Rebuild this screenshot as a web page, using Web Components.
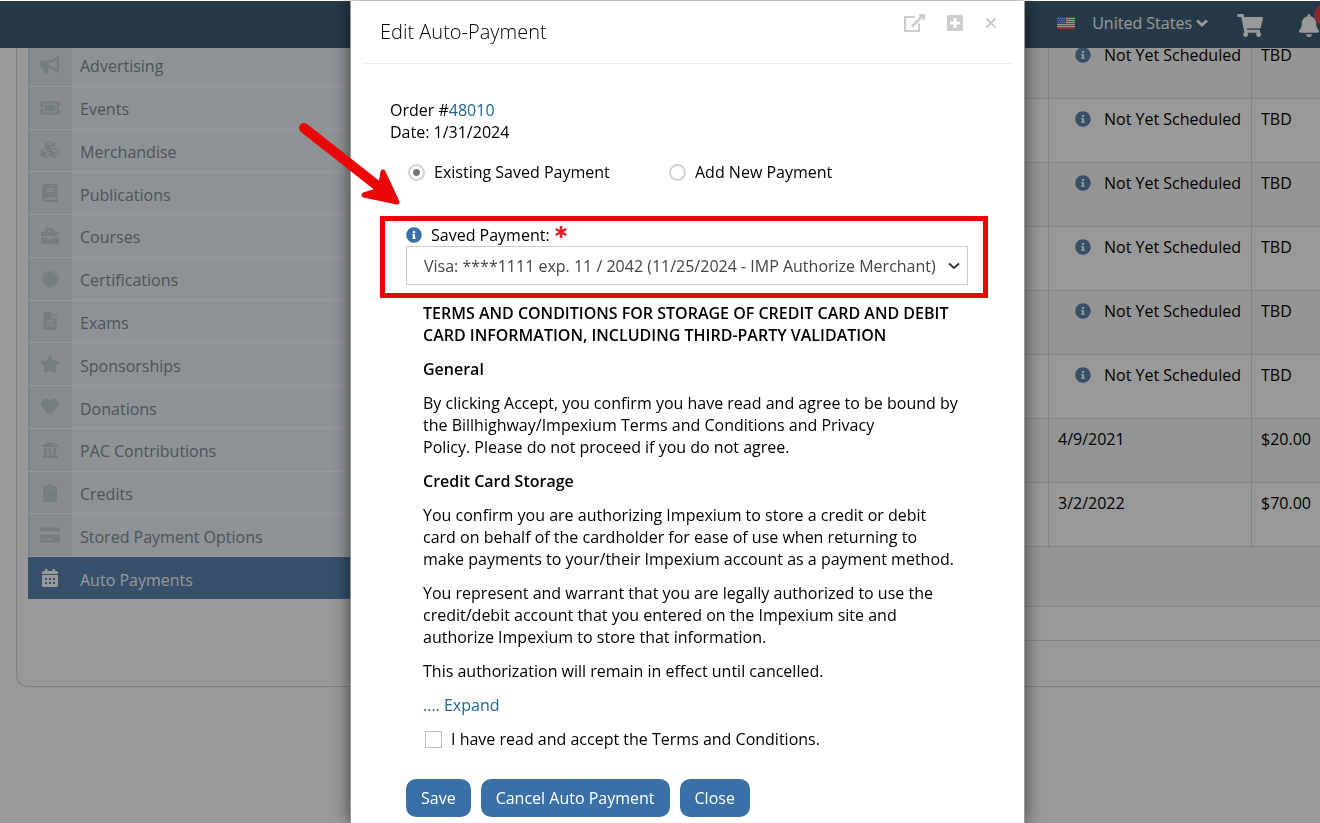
<!DOCTYPE html>
<html lang="en">
<head>
<meta charset="utf-8">
<meta name="viewport" content="width=device-width, initial-scale=1">
<title>Auto Payments</title>
<style>
	html, body {
		margin: 0;
		height: 100%;
		overflow: hidden;
	}
	body {
		font-family: "Open Sans", "Noto Sans", sans-serif;
		font-size: 16px;
		line-height: 22px;
		color: #000;
		background: #fff;
	}
</style>
</head>
<body>
<auto-payments-page></auto-payments-page>

<script>
const icons = {
	bullhorn: ['0 0 576 512', '<path d="M576 240c0-23.63-12.95-44.04-32-55.12V32.010C544 23.260 537.020 0 512 0c-7.120 0-14.190 2.380-19.980 7.020l-85.030 68.030C364.280 109.190 310.660 128 256 128H64c-35.350 0-64 28.650-64 64v96c0 35.350 28.650 64 64 64h33.700c-1.390 10.480-2.180 21.140-2.180 32 0 39.770 9.260 77.350 25.560 110.940 5.190 10.690 16.520 17.060 28.400 17.060h74.280c26.050 0 41.690-29.840 25.900-50.560-16.400-21.520-26.150-48.360-26.150-77.440 0-11.110 1.620-21.790 4.410-32H256c54.660 0 108.280 18.810 150.980 52.950l85.030 68.030a32 32 0 0 0 19.980 7.020c24.920 0 32-22.780 32-32V295.130C563.050 284.040 576 263.630 576 240zm-96 141.420l-33.050-26.440C392.950 311.780 325.120 288 256 288v-96c69.120 0 136.950-23.780 190.950-66.980L480 98.580v282.840z"/>'],
	ticket: ['0 0 576 512', '<path d="M128 160h320v192H128V160zm400 96c0 26.510 21.490 48 48 48v96c0 26.510-21.490 48-48 48H48c-26.510 0-48-21.490-48-48v-96c26.510 0 48-21.490 48-48s-21.490-48-48-48v-96c0-26.510 21.490-48 48-48h480c26.510 0 48 21.490 48 48v96c-26.510 0-48 21.490-48 48zm-48-104c0-13.255-10.745-24-24-24H120c-13.255 0-24 10.745-24 24v208c0 13.255 10.745 24 24 24h336c13.255 0 24-10.745 24-24V152z"/>'],
	cubes: ['0 0 18 16', '<path fill-rule="evenodd" d="M9 0l4.300 1.600v4.600l4.200 1.800v5.300L13.200 15.400 9 13.300l-4.200 2.100L.5 13.300V8l4.200-1.800V1.600zM9 1.300L6.100 2.400 9 3.500l2.900-1.100zM9.700 4.600v2.600l2.500-1.100V3.700zM4.800 7.400L2 8.600l2.800 1.200 2.800-1.200zM13.200 7.400l-2.800 1.200 2.800 1.200L16 8.600zM5.500 11v2.900l2.700-1.400V9.800zM13.900 11v2.900l2.500-1.400V9.800z"/>'],
	book: ['0 0 448 512', '<path d="M448 360V24c0-13.300-10.700-24-24-24H96C43 0 0 43 0 96v320c0 53 43 96 96 96h328c13.300 0 24-10.700 24-24v-16c0-7.500-3.500-14.300-8.900-18.700-4.200-15.400-4.200-59.300 0-74.700 5.400-4.300 8.900-11.100 8.900-18.600zM128 134c0-3.300 2.700-6 6-6h212c3.300 0 6 2.700 6 6v20c0 3.300-2.700 6-6 6H134c-3.300 0-6-2.700-6-6v-20zm0 64c0-3.300 2.700-6 6-6h212c3.300 0 6 2.700 6 6v20c0 3.300-2.700 6-6 6H134c-3.300 0-6-2.700-6-6v-20zm253.400 250H96c-17.700 0-32-14.300-32-32 0-17.600 14.400-32 32-32h285.400c-1.900 17.100-1.900 46.900 0 64z"/>'],
	briefcase: ['0 0 512 512', '<path d="M320 336c0 8.840-7.160 16-16 16h-96c-8.840 0-16-7.160-16-16v-48H0v144c0 25.600 22.400 48 48 48h416c25.600 0 48-22.400 48-48V288H320v48zm144-208h-80V80c0-25.600-22.400-48-48-48H176c-25.600 0-48 22.400-48 48v48H48c-25.600 0-48 22.400-48 48v80h512v-80c0-25.600-22.400-48-48-48zm-144 0H192V96h128v32z"/>'],
	certificate: ['-9 -9 18 18', '<circle r="7"/><circle r="7.500" fill="none" stroke="currentColor" stroke-width="3" pathLength="32" stroke-dasharray="1 1"/>'],
	file: ['0 0 384 512', '<path d="M224 136V0H24C10.700 0 0 10.700 0 24v464c0 13.300 10.700 24 24 24h336c13.300 0 24-10.700 24-24V160H248c-13.200 0-24-10.800-24-24zm64 236c0 6.600-5.400 12-12 12H108c-6.600 0-12-5.400-12-12v-8c0-6.600 5.400-12 12-12h168c6.600 0 12 5.400 12 12v8zm0-64c0 6.600-5.400 12-12 12H108c-6.600 0-12-5.400-12-12v-8c0-6.600 5.400-12 12-12h168c6.600 0 12 5.400 12 12v8zm0-72v8c0 6.600-5.400 12-12 12H108c-6.600 0-12-5.400-12-12v-8c0-6.600 5.400-12 12-12h168c6.600 0 12 5.400 12 12zm96-114.100v6.100H256V0h6.100c6.400 0 12.500 2.500 17 7l97.900 98c4.500 4.500 7 10.600 7 16.900z"/>'],
	star: ['0 0 576 512', '<path d="M259.300 17.800L194 150.200 47.900 171.500c-26.200 3.800-36.700 36.100-17.700 54.600l105.700 103-25 145.500c-4.500 26.300 23.200 46 46.400 33.700L288 439.600l130.700 68.700c23.200 12.200 50.900-7.400 46.400-33.700l-25-145.500 105.700-103c19-18.500 8.500-50.800-17.700-54.600L382 150.200 316.700 17.800c-11.700-23.600-45.600-23.900-57.400 0z"/>'],
	heart: ['0 0 512 512', '<path d="M462.300 62.600C407.500 15.900 326 24.300 275.700 76.200L256 96.500l-19.700-20.300C186.100 24.300 104.500 15.900 49.700 62.600c-62.800 53.600-66.100 149.800-9.900 207.900l193.500 199.800c12.500 12.900 32.800 12.900 45.300 0l193.500-199.800c56.300-58.100 53-154.300-9.800-207.900z"/>'],
	bank: ['0 0 18 18', '<path d="M9 1l8 3v2H1V4zM3 7h2.500v6H3zM7.800 7h2.400v6H7.800zM12.500 7H15v6h-2.500zM2 13.500h14V15h1v2H1v-2h1z"/>'],
	clipboard: ['0 0 14 18', '<path fill-rule="evenodd" d="M1.500 2H4a3 3 0 0 1 6 0h2.500A1.500 1.500 0 0 1 14 3.500v13a1.500 1.500 0 0 1-1.500 1.500h-11A1.500 1.500 0 0 1 0 16.500v-13A1.500 1.500 0 0 1 1.500 2zM7 1.400a.8.8 0 1 0 0 1.600.8.8 0 0 0 0-1.600zM4 4.500v.700h6v-.700z"/>'],
	card: ['0 0 20 18', '<path fill-rule="evenodd" d="M1.500 1.500h17A1.500 1.500 0 0 1 20 3v2H0V3a1.500 1.500 0 0 1 1.500-1.500zM0 8.500h20V15a1.500 1.500 0 0 1-1.500 1.500h-17A1.500 1.500 0 0 1 0 15zM2.500 12.500V14H5v-1.500zM6.500 12.500V14h5v-1.500z"/>'],
	calendar: ['0 0 16 18', '<path fill-rule="evenodd" d="M3 0h2.500v2h5V0H13v2h1.500A1.500 1.500 0 0 1 16 3.500V5H0V3.500A1.500 1.500 0 0 1 1.500 2H3zM0 6h16v10.500a1.500 1.500 0 0 1-1.500 1.500h-13A1.500 1.500 0 0 1 0 16.500zM3 9v2h2V9zM7 9v2h2V9zM11 9v2h2V9zM3 13v2h2v-2zM7 13v2h2v-2zM11 13v2h2v-2z"/>'],
	info: ['0 0 512 512', '<path d="M256 8C119.043 8 8 119.083 8 256c0 136.997 111.043 248 248 248s248-111.003 248-248C504 119.083 392.957 8 256 8zm0 110c23.196 0 42 18.804 42 42s-18.804 42-42 42-42-18.804-42-42 18.804-42 42-42zm56 254c0 6.627-5.373 12-12 12h-88c-6.627 0-12-5.373-12-12v-24c0-6.627 5.373-12 12-12h12v-64h-12c-6.627 0-12-5.373-12-12v-24c0-6.627 5.373-12 12-12h64c6.627 0 12 5.373 12 12v100h12c6.627 0 12 5.373 12 12v24z"/>'],
	cart: ['0 0 576 512', '<path d="M528.120 301.319l47.273-208C578.806 78.301 567.391 64 551.990 64H159.208l-9.166-44.810C147.758 8.021 137.930 0 126.529 0H24C10.745 0 0 10.745 0 24v16c0 13.255 10.745 24 24 24h69.883l70.248 343.435C147.325 417.100 136 435.222 136 456c0 30.928 25.072 56 56 56s56-25.072 56-56c0-15.674-6.447-29.835-16.824-40h209.647C430.447 426.165 424 440.326 424 456c0 30.928 25.072 56 56 56s56-25.072 56-56c0-22.172-12.888-41.332-31.579-50.405l5.517-24.276c3.413-15.018-8.002-29.319-23.403-29.319H218.117l-6.545-32h293.145c11.206 0 20.920-7.754 23.403-18.681z"/>'],
	bell: ['0 0 448 512', '<path d="M224 512c35.320 0 63.970-28.650 63.970-64H160.030c0 35.350 28.650 64 63.970 64zm215.390-149.710c-19.320-20.760-55.470-51.990-55.470-154.290 0-77.700-54.480-139.900-127.940-155.160V32c0-17.670-14.320-32-31.980-32s-31.980 14.330-31.980 32v20.840C118.560 68.100 64.080 130.300 64.080 208c0 102.300-36.150 133.530-55.470 154.290-6 6.450-8.660 14.160-8.610 21.710.110 16.400 12.980 32 32.100 32h383.800c19.120 0 32-15.600 32.100-32 .050-7.550-2.610-15.270-8.610-21.710z"/>'],
	flag: ['0 0 18 12', '<path fill="#fff" d="M0 0h18v12H0z"/><path fill="#ef5b50" d="M0 0h18v1H0zM0 2h18v1H0zM0 4h18v1H0zM0 6h18v1H0zM0 8h18v1H0zM0 10h18v2H0z"/><path fill="#4f7fd8" d="M0 0h9v7H0z"/><path stroke="#a9bbe6" stroke-width="1" stroke-dasharray="1 1" d="M1 1.500h7M2 3.500h6M1 5.500h7"/>'],
	chevron: ['0 0 12 8', '<path fill="none" stroke="currentColor" stroke-width="2" d="M1 1.500l5 4.500 5-4.500"/>'],
	caret: ['0 0 12 8', '<path fill="none" stroke="currentColor" stroke-width="3" d="M1 1.500l5 4.500 5-4.500"/>'],
	popout: ['0 0 21 18', '<path fill="none" stroke="currentColor" stroke-width="2" d="M11 3H1v14h14V9.500"/><path fill="none" stroke="currentColor" stroke-width="3" d="M8 12.500l9.500-9.500"/><path d="M14 0h7v7l-2.300-2.300-2.400-2.400z"/>'],
	plus: ['0 0 16 16', '<path fill-rule="evenodd" d="M1.500 0h13A1.500 1.500 0 0 1 16 1.500v13a1.500 1.500 0 0 1-1.500 1.500h-13A1.500 1.500 0 0 1 0 14.500v-13A1.500 1.500 0 0 1 1.500 0zM6.500 3v3.500H3v3h3.500V13h3V9.500H13v-3H9.500V3z"/>'],
	close: ['0 0 12 12', '<path fill="none" stroke="currentColor" stroke-width="2" d="M1.500 1.500l9 9M10.500 1.500l-9 9"/>'],
	asterisk: ['0 0 12 12', '<path fill="none" stroke="currentColor" stroke-width="2.500" d="M6 0v12M.8 3l10.400 6M11.200 3L.8 9"/>']
};

class SvgIcon extends HTMLElement {
	constructor() {
		super();
		const [viewBox, shape] = icons[this.getAttribute('name')];
		this.attachShadow({mode: 'open'}).innerHTML = `
			<style>
				:host { display: inline-flex; width: 20px; height: 18px; }
				svg { width: 100%; height: 100%; fill: currentColor; }
			</style>
			<svg viewBox="${viewBox}" aria-hidden="true">${shape}</svg>
		`;
	}
}

class TopBar extends HTMLElement {
	constructor() {
		super();
		this.attachShadow({mode: 'open'}).innerHTML = `
			<style>
				:host {
					position: relative;
					z-index: 1;
					display: flex;
					justify-content: flex-end;
					align-items: center;
					box-sizing: border-box;
					height: 47px;
					padding-bottom: 3px;
					color: #fff;
					background: #3e5f76;
				}
				button {
					display: flex;
					align-items: center;
					padding: 0;
					border: 0;
					font: inherit;
					color: inherit;
					background: none;
				}
				.country { margin-right: 29px; }
				.country span { margin: 0 4px 0 17px; }
				.flag { width: 18px; height: 12px; }
				.caret { width: 12px; height: 8px; }
				.cart { width: 26px; height: 23px; margin-right: 35px; }
				.cart, .alerts { margin-top: 4px; }
				.alerts { position: relative; }
				.bell { width: 22px; height: 23px; }
				.badge {
					position: absolute;
					top: -9px;
					left: 16px;
					width: 20px;
					height: 20px;
					border-radius: 50%;
					background: #e8454b;
				}
			</style>
			<button class="country">
				<svg-icon class="flag" name="flag"></svg-icon>
				<span>United States</span>
				<svg-icon class="caret" name="caret"></svg-icon>
			</button>
			<button aria-label="Cart"><svg-icon class="cart" name="cart"></svg-icon></button>
			<button class="alerts" aria-label="Notifications">
				<svg-icon class="bell" name="bell"></svg-icon>
				<span class="badge"></span>
			</button>
		`;
	}
}

class NavItem extends HTMLElement {
	constructor() {
		super();
		this.attachShadow({mode: 'open'}).innerHTML = `
			<style>
				:host { display: grid; color: #788b98; background: #eff5f8; }
				:host([active]) { color: #fff; background: #5a84b2; }
				a {
					display: flex;
					align-items: stretch;
					color: inherit;
					text-decoration: none;
				}
				.icon {
					display: flex;
					flex: none;
					align-items: center;
					justify-content: center;
					width: 40px;
					padding-right: 2px;
					color: #c3d0d9;
					background: #e2eaee;
					border-left: 2px solid #d0dbe6;
				}
				:host([active]) .icon {
					color: inherit;
					background: none;
					border-color: transparent;
				}
				.label { align-self: center; padding: 3px 0 0 8px; }
			</style>
			<a href="#">
				<span class="icon"><svg-icon name="${this.getAttribute('icon')}"></svg-icon></span>
				<span class="label"><slot></slot></span>
			</a>
		`;
	}
}

class SideNav extends HTMLElement {
	constructor() {
		super();
		this.attachShadow({mode: 'open'}).innerHTML = `
			<style>
				:host { display: block; }
				nav {
					display: grid;
					grid-auto-rows: 1fr;
					gap: 1px;
					min-height: 555px;
				}
			</style>
			<nav><slot></slot></nav>
		`;
	}
}

class PaymentsTable extends HTMLElement {
	constructor() {
		super();
		const pending = '<tr><td></td><td class="pending"><svg-icon name="info"></svg-icon>Not Yet Scheduled</td><td>TBD</td></tr>';
		this.attachShadow({mode: 'open'}).innerHTML = `
			<style>
				:host { display: block; }
				table {
					width: 100%;
					table-layout: fixed;
					border-collapse: collapse;
				}
				td {
					height: 44px;
					padding: 9px 9px 10px;
					vertical-align: top;
					border: solid #dcdcdc;
					border-width: 0 1px 1px 0;
				}
				tr:nth-child(odd) { background: #f9f9f9; }
				.date { width: 203px; }
				.amount { width: 83px; }
				.pending { padding-left: 26px; }
				.pending svg-icon {
					width: 16px;
					height: 16px;
					margin-right: 13px;
					vertical-align: -2px;
					color: #5a84b2;
				}
				.strip { height: 33px; border-bottom: 1px solid #dcdcdc; }
				.pager { height: 59px; background: #f9f9f9; }
			</style>
			<table>
				<colgroup><col><col class="date"><col class="amount"></colgroup>
				<tbody>
					${pending.repeat(6)}
					<tr><td></td><td>4/9/2021</td><td>$20.00</td></tr>
					<tr><td></td><td>3/2/2022</td><td>$70.00</td></tr>
				</tbody>
			</table>
			<div class="strip pager"></div>
			<div class="strip"></div>
		`;
	}
}

class ModalDialog extends HTMLElement {
	constructor() {
		super();
		this.attachShadow({mode: 'open'}).innerHTML = `
			<style>
				:host {
					position: fixed;
					inset: 1px 0 0;
					z-index: 2;
					display: flex;
					padding: 0 295px 0 350px;
					background: rgba(0, 0, 0, .4);
				}
				section {
					flex: 1;
					background: #fff;
					border: solid #999;
					border-width: 0 1px;
					box-shadow: 0 0 16px rgba(0, 0, 0, .6);
				}
				header {
					display: flex;
					align-items: center;
					height: 62px;
					margin: 0 11px;
					border-bottom: 1px solid #ebebeb;
				}
				h1 {
					flex: 1;
					margin: 0;
					padding-left: 18px;
					font-size: 20px;
					line-height: 22px;
					font-weight: 300;
				}
				.tools {
					display: flex;
					align-items: center;
					gap: 22px;
					padding: 0 16px 18px 0;
				}
				.tools button {
					display: flex;
					padding: 0;
					border: 0;
					color: #ccc;
					background: none;
				}
				.tools svg-icon { width: 16px; height: 16px; }
				.tools .popout { width: 21px; height: 18px; }
				.tools .close { width: 12px; height: 12px; }
				.body { padding: 35px 36px 0 29px; }
			</style>
			<section role="dialog" aria-labelledby="title">
				<header>
					<h1 id="title"><slot name="title"></slot></h1>
					<div class="tools">
						<button aria-label="Open in new window"><svg-icon class="popout" name="popout"></svg-icon></button>
						<button aria-label="Maximize"><svg-icon name="plus"></svg-icon></button>
						<button aria-label="Close"><svg-icon class="close" name="close"></svg-icon></button>
					</div>
				</header>
				<div class="body"><slot></slot></div>
			</section>
		`;
	}
}

class PaymentSource extends HTMLElement {
	constructor() {
		super();
		this.attachShadow({mode: 'open'}).innerHTML = `
			<style>
				:host {
					display: grid;
					grid-template-columns: 261px 1fr;
					padding: 18px 0 33px 28px;
				}
				label { display: flex; align-items: center; gap: 9px; }
				input {
					appearance: none;
					width: 17px;
					height: 17px;
					margin: 0;
					border: 2px solid #d2d2d2;
					border-radius: 50%;
					background: #fff;
				}
				input:checked {
					background: radial-gradient(circle, #777 3px, #fff 4px);
				}
			</style>
			<label><input type="radio" name="source" checked>Existing Saved Payment</label>
			<label><input type="radio" name="source">Add New Payment</label>
		`;
	}
}

class SavedPaymentField extends HTMLElement {
	constructor() {
		super();
		this.attachShadow({mode: 'open'}).innerHTML = `
			<style>
				:host {
					display: block;
					padding: 3px 15px 8px 21px;
					border: 5px solid #ea0606;
				}
				label { display: flex; align-items: center; }
				.info {
					width: 16px;
					height: 16px;
					margin-right: 9px;
					color: #3a70a8;
				}
				.required {
					width: 12px;
					height: 12px;
					margin: 0 0 6px 5px;
					color: #e61c24;
				}
				.control { position: relative; }
				select {
					appearance: none;
					display: block;
					width: 100%;
					height: 39px;
					padding: 0 17px;
					border: 1px solid #ccc;
					border-radius: 0;
					font: inherit;
					color: #444;
					background: #fff;
				}
				.chevron {
					position: absolute;
					top: 16px;
					right: 8px;
					width: 12px;
					height: 8px;
					color: #333;
					pointer-events: none;
				}
			</style>
			<label for="saved">
				<svg-icon class="info" name="info"></svg-icon>Saved Payment:
				<svg-icon class="required" name="asterisk"></svg-icon>
			</label>
			<div class="control">
				<select id="saved">
					<option>Visa: ****1111 exp. 11 / 2042 (11/25/2024 - IMP Authorize Merchant)</option>
				</select>
				<svg-icon class="chevron" name="chevron"></svg-icon>
			</div>
		`;
	}
}

class PaymentTerms extends HTMLElement {
	constructor() {
		super();
		this.attachShadow({mode: 'open'}).innerHTML = `
			<style>
				:host { display: block; padding: 4px 28px 0 43px; }
				h2, p {
					margin: 0 0 12px;
					font-size: 16px;
					line-height: 22px;
				}
				h2 { font-weight: 600; }
				a { color: #1b6692; text-decoration: none; }
				label { display: flex; align-items: center; gap: 9px; padding-left: 2px; }
				input {
					appearance: none;
					width: 17px;
					height: 17px;
					margin: 0;
					border: 1px solid #bbb;
					background: #fff;
				}
			</style>
			<h2>TERMS AND CONDITIONS FOR STORAGE OF CREDIT CARD AND DEBIT CARD INFORMATION, INCLUDING THIRD-PARTY VALIDATION</h2>
			<h2>General</h2>
			<p>By clicking Accept, you confirm you have read and agree to be bound by the Billhighway/Impexium Terms and Conditions and Privacy Policy.&nbsp;Please do not proceed if you do not agree.</p>
			<h2>Credit Card Storage</h2>
			<p>You confirm you are authorizing Impexium to store a credit or debit card on behalf of the cardholder for ease of use when returning to make payments to your/their Impexium account as a payment method.</p>
			<p>You represent and warrant that you are legally authorized to use the credit/debit account that you entered on the Impexium site and authorize Impexium to store that information.</p>
			<p>This authorization will remain in effect until cancelled.</p>
			<p><a href="#">.... Expand</a></p>
			<label><input type="checkbox">I have read and accept the Terms and Conditions.</label>
		`;
	}
}

class ActionButton extends HTMLElement {
	constructor() {
		super();
		this.attachShadow({mode: 'open'}).innerHTML = `
			<style>
				:host { display: inline-flex; }
				button {
					padding: 8px 15px;
					border: 0;
					border-radius: 10px;
					font: inherit;
					color: #fff;
					background: #3a70a8;
				}
			</style>
			<button><slot></slot></button>
		`;
	}
}

class PointerArrow extends HTMLElement {
	constructor() {
		super();
		this.attachShadow({mode: 'open'}).innerHTML = `
			<style>
				:host {
					position: fixed;
					top: 122px;
					left: 298px;
					z-index: 3;
					width: 104px;
					height: 84px;
					pointer-events: none;
				}
				svg { width: 100%; height: 100%; }
			</style>
			<svg viewBox="0 0 104 84" fill="#ea0606" stroke="#ea0606" stroke-linecap="round" stroke-linejoin="round" aria-hidden="true">
				<path stroke-width="10" d="M6 6l80 63"/>
				<path stroke-width="5" d="M85 50l14 30-33-7 16-5z"/>
			</svg>
		`;
	}
}

class AutoPaymentsPage extends HTMLElement {
	constructor() {
		super();
		this.attachShadow({mode: 'open'}).innerHTML = `
			<style>
				:host { display: block; height: 100%; padding-top: 1px; box-sizing: border-box; overflow: hidden; }
				/* the panel is scrolled up under the bar and runs past the right edge */
				.panel {
					display: flex;
					align-items: flex-start;
					margin: -13px -16px 0 16px;
					border: 1px solid #d4d4d4;
					border-top: 0;
					border-radius: 0 0 12px 12px;
				}
				side-nav { flex: none; width: 340px; padding: 9px 0 87px 11px; }
				payments-table { flex: 1; }
				.order a { color: #1b6692; text-decoration: none; }
				.order { padding-left: 10px; }
				.actions { display: flex; gap: 10px; padding: 29px 0 0 26px; }
			</style>
			<top-bar></top-bar>
			<div class="panel">
				<side-nav>
					<nav-item icon="bullhorn">Advertising</nav-item>
					<nav-item icon="ticket">Events</nav-item>
					<nav-item icon="cubes">Merchandise</nav-item>
					<nav-item icon="book">Publications</nav-item>
					<nav-item icon="briefcase">Courses</nav-item>
					<nav-item icon="certificate">Certifications</nav-item>
					<nav-item icon="file">Exams</nav-item>
					<nav-item icon="star">Sponsorships</nav-item>
					<nav-item icon="heart">Donations</nav-item>
					<nav-item icon="bank">PAC Contributions</nav-item>
					<nav-item icon="clipboard">Credits</nav-item>
					<nav-item icon="card">Stored Payment Options</nav-item>
					<nav-item icon="calendar" active>Auto Payments</nav-item>
				</side-nav>
				<payments-table></payments-table>
			</div>
			<modal-dialog>
				<span slot="title">Edit Auto-Payment</span>
				<div class="order">
					<div>Order #<a href="#">48010</a></div>
					<div>Date: 1/31/2024</div>
				</div>
				<payment-source></payment-source>
				<saved-payment-field></saved-payment-field>
				<payment-terms></payment-terms>
				<div class="actions">
					<action-button>Save</action-button>
					<action-button>Cancel Auto Payment</action-button>
					<action-button>Close</action-button>
				</div>
			</modal-dialog>
			<pointer-arrow></pointer-arrow>
		`;
	}
}

customElements.define('svg-icon', SvgIcon);
customElements.define('top-bar', TopBar);
customElements.define('nav-item', NavItem);
customElements.define('side-nav', SideNav);
customElements.define('payments-table', PaymentsTable);
customElements.define('modal-dialog', ModalDialog);
customElements.define('payment-source', PaymentSource);
customElements.define('saved-payment-field', SavedPaymentField);
customElements.define('payment-terms', PaymentTerms);
customElements.define('action-button', ActionButton);
customElements.define('pointer-arrow', PointerArrow);
customElements.define('auto-payments-page', AutoPaymentsPage);
</script>
</body>
</html>
